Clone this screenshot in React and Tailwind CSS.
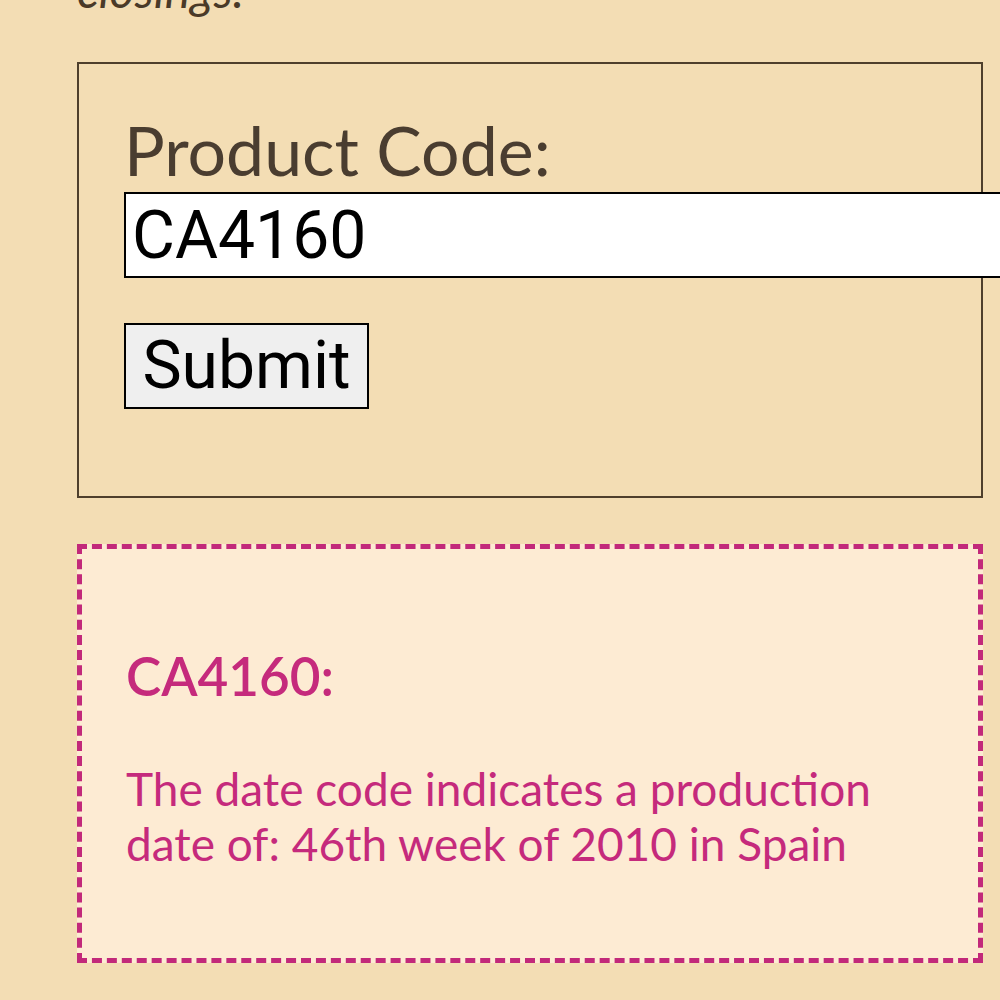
export default function App() {
  return (
    <div
      className="min-h-[1000px] w-[1000px] overflow-hidden bg-[#f3ddb4] pl-[77px] pr-[17px]"
      style={{ fontFamily: "Lato, 'Open Sans', sans-serif" }}
    >
      {/* tail of the intro paragraph */}
      <p className="-mt-[38px] text-[48px] italic leading-[56px] text-[#4a3a28]">
        closings.
      </p>

      {/* lookup form */}
      <form className="mt-[44px] h-[436px] border-2 border-[#4e3f2c] pl-[45px] pt-[50px]">
        <label className="block text-[68px] leading-[72px] text-[#4a3d30]">
          Product Code:
        </label>
        <input
          type="text"
          defaultValue="CA4160"
          className="mt-[6px] block h-[86px] w-[950px] border-2 border-black bg-white px-[6px] text-[66px] text-black outline-none"
          style={{ fontFamily: "Roboto, sans-serif" }}
        />
        <button
          type="button"
          className="mt-[45px] block h-[86px] w-[245px] border-2 border-black bg-[#efefef] text-[66px] leading-none text-black"
          style={{ fontFamily: "Roboto, sans-serif" }}
        >
          Submit
        </button>
      </form>

      {/* result */}
      <div className="mt-[46px] h-[419px] border-[5px] border-dashed border-[#c2297a] bg-[#fdebd3] pl-[44px] pt-[92px] text-[#c52a7c]">
        <h3 className="text-[53px] font-semibold leading-[70px]">CA4160:</h3>
        <p className="mt-[50px] max-w-[790px] text-[46px] leading-[55px]">
          The date code indicates a production date of: 46th week of 2010 in Spain
        </p>
      </div>
    </div>
  );
}
